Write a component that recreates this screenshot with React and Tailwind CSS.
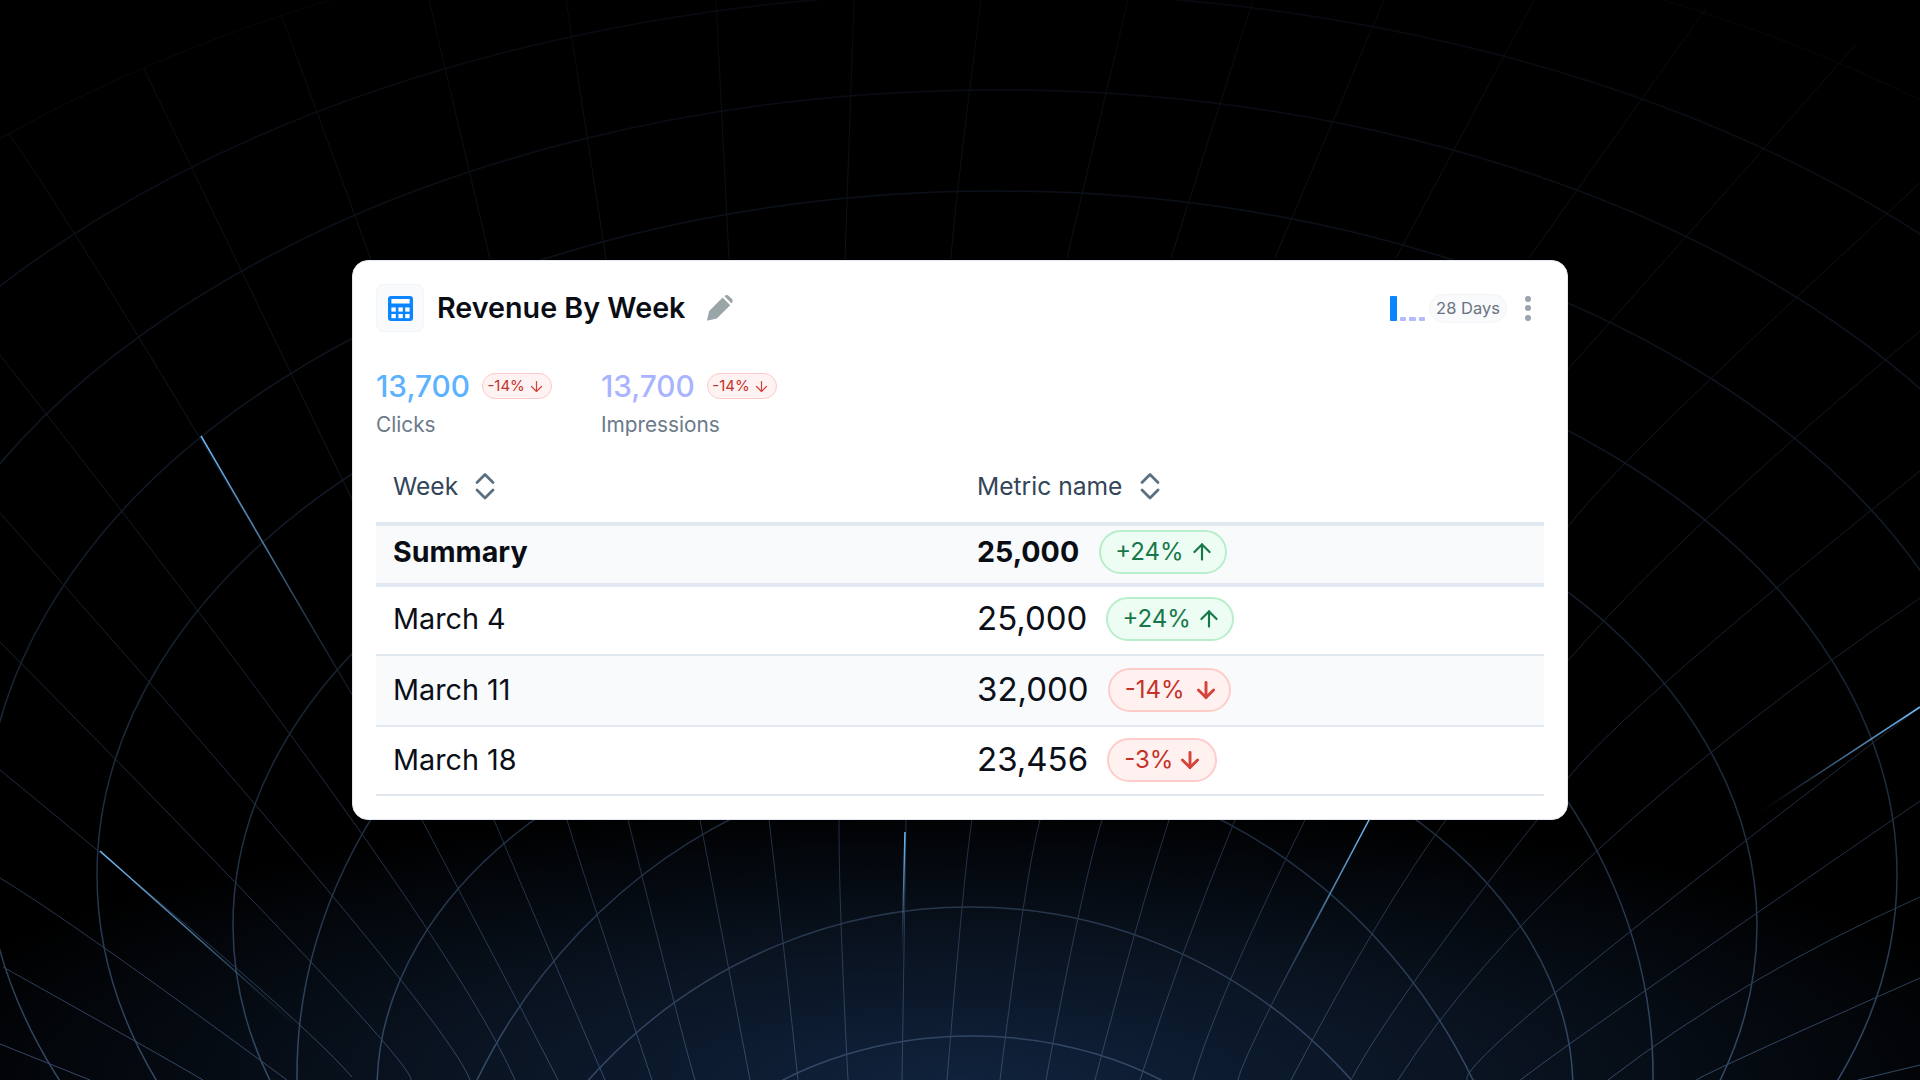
import React from "react";
import { ArrowUp, ArrowDown } from "lucide-react";

const rings = [
  [997, 730, 1430, 825, 0.5],
  [997, 765, 1270, 773, 1],
  [997, 800, 1132, 710, 1],
  [997, 836, 1013, 645, 1],
  [997, 875, 900, 575, 1],
  [995, 925, 762, 505, 1],
  [975, 1075, 678, 563, 1],
  [975, 1090, 598, 400, 1],
  [975, 1350, 560, 590, 1.1],
  [970, 1447, 520, 540, 1.1],
  [972, 1297, 340, 261, 1.1],
];

const lines = [
  [[282, 17], [355, 216], [370, 259]],
  [[429, 0], [490, 259]],
  [[566, 0], [606, 259]],
  [[716, 0], [729, 259]],
  [[854, 0], [845, 259]],
  [[981, 0], [960, 170], [951, 259]],
  [[1128, 0], [1067, 258]],
  [[1253, 0], [1171, 258]],
  [[1384, 0], [1275, 258]],
  [[1534, 0], [1396, 258]],
  [[1707, 7], [1529, 258]],
  [[1857, 43], [1667, 258], [1560, 378]],
  [[1920, 183], [1658, 430], [1560, 540]],
  [[1920, 331], [1706, 519], [1560, 670]],
  [[1920, 471], [1665, 683], [1560, 790]],
  [[1920, 598], [1708, 747], [1600, 848], [1398, 1080]],
  [[1920, 707], [1630, 922], [1550, 997], [1476, 1080]],
  [[1920, 801], [1645, 978], [1564, 1048], [1531, 1080]],
  [[1920, 897], [1754, 982], [1608, 1080]],
  [[1920, 978], [1735, 1061], [1700, 1080]],
  [[1920, 1065], [1858, 1080]],
  [[9, 134], [138, 336], [360, 708]],
  [[144, 69], [242, 272], [360, 516]],
  [[0, 355], [125, 507], [292, 733], [352, 820], [428, 938], [515, 1080]],
  [[0, 513], [153, 679], [340, 905], [470, 1080]],
  [[0, 642], [120, 756], [310, 961], [411, 1080]],
  [[0, 770], [235, 967], [352, 1077]],
  [[0, 878], [106, 949], [287, 1080]],
  [[3, 967], [133, 1040], [203, 1080]],
  [[0, 1044], [90, 1080]],
  [[422, 820], [515, 997], [558, 1080]],
  [[494, 820], [550, 952], [605, 1080]],
  [[567, 820], [595, 908], [652, 1080]],
  [[628, 820], [673, 998], [695, 1080]],
  [[700, 820], [728, 965], [750, 1080]],
  [[769, 820], [783, 942], [798, 1080]],
  [[839, 820], [841, 923], [848, 1080]],
  [[906, 820], [902, 1080]],
  [[972, 820], [962, 908], [947, 1080]],
  [[1040, 820], [1023, 910], [1000, 1080]],
  [[1102, 820], [1078, 918], [1046, 1080]],
  [[1169, 820], [1135, 933], [1095, 1080]],
  [[1235, 820], [1184, 951], [1140, 1080]],
  [[1305, 820], [1233, 974], [1193, 1080]],
  [[1369, 820], [1274, 1000], [1238, 1080]],
  [[1446, 820], [1376, 927], [1291, 1080]],
  [[1537, 820], [1486, 882], [1419, 975], [1352, 1078]],
];

const toPath = (pts) => {
  const a = pts[0];
  const b = pts[pts.length - 1];
  if (pts.length === 2) return `M${a[0]} ${a[1]}L${b[0]} ${b[1]}`;
  const m = pts[Math.floor(pts.length / 2)];
  const cx = 2 * m[0] - (a[0] + b[0]) / 2;
  const cy = 2 * m[1] - (a[1] + b[1]) / 2;
  return `M${a[0]} ${a[1]}Q${cx} ${cy} ${b[0]} ${b[1]}`;
};

const glints = [
  ["g1", [201, 436], [344, 682]],
  ["g2", [100, 851], [300, 1029]],
  ["g3", [905, 832], [902, 955]],
  ["g4", [1369, 820], [1272, 1004]],
  ["g5", [1920, 707], [1760, 812]],
];

function Backdrop() {
  return (
    <svg className="absolute inset-0 h-full w-full" viewBox="0 0 1920 1080" preserveAspectRatio="none" fill="none">
      <defs>
        <linearGradient id="mesh" gradientUnits="userSpaceOnUse" x1="0" y1="0" x2="0" y2="1080">
          <stop offset="0" stopColor="#070a10" />
          <stop offset="0.25" stopColor="#0c121c" />
          <stop offset="0.55" stopColor="#141e2c" />
          <stop offset="0.8" stopColor="#223146" />
          <stop offset="1" stopColor="#344a68" />
        </linearGradient>
        {glints.map(([id, s, e]) => (
          <linearGradient key={id} id={id} gradientUnits="userSpaceOnUse" x1={s[0]} y1={s[1]} x2={e[0]} y2={e[1]}>
            <stop offset="0" stopColor="#70bcfb" />
            <stop offset="0.45" stopColor="#5f9ccc" stopOpacity="0.75" />
            <stop offset="1" stopColor="#3a4f6e" stopOpacity="0" />
          </linearGradient>
        ))}
      </defs>
      {lines.map((pts, i) => (
        <path key={i} d={toPath(pts)} stroke="url(#mesh)" strokeWidth="1" />
      ))}
      {rings.map(([cx, cy, rx, ry, o], i) => (
        <ellipse key={i} cx={cx} cy={cy} rx={rx} ry={ry} stroke="url(#mesh)" strokeWidth="1.5" opacity={o} />
      ))}
      <path d="M201 436Q268 552 344 682" stroke="url(#g1)" strokeWidth="1.5" />
      <path d="M100 851L300 1029" stroke="url(#g2)" strokeWidth="1.5" />
      <path d="M905 832L902 955" stroke="url(#g3)" strokeWidth="1.5" />
      <path d="M1369 820L1272 1004" stroke="url(#g4)" strokeWidth="1.5" />
      <path d="M1920 707L1760 812" stroke="url(#g5)" strokeWidth="1.5" />
    </svg>
  );
}

function TableIcon() {
  return (
    <svg width="25" height="25" viewBox="0 0 25 25">
      <rect width="25" height="25" rx="3" fill="#0a84ff" />
      <rect x="3.4" y="3" width="18.2" height="4.5" fill="#fff" />
      {[11.4, 18].map((y) =>
        [3.4, 10.4, 17.2].map((x) => <rect key={`${x}-${y}`} x={x} y={y} width="4.4" height="4.2" fill="#fff" />)
      )}
    </svg>
  );
}

function PencilIcon() {
  return (
    <svg width="26" height="26" viewBox="0 0 26 26" fill="#9aa5a8">
      <path d="M0.5 25.5c-.4-.1-.5-.4-.4-.8L2.2 16 15.6 2.6l7.6 7.6L9.8 23.6 1 25.6z" />
      <path d="M17.2 1l1.2-.6c1.2-.6 2.4-.5 3.4.5l3 2.9c1 1 1.2 2.3.5 3.5l-.7 1.2z" />
    </svg>
  );
}

function SortIcon() {
  return (
    <svg width="20" height="28" viewBox="0 0 20 28" fill="none" stroke="#5d707f" strokeWidth="2.8" strokeLinecap="round" strokeLinejoin="round">
      <path d="M2 10.5L10 2.5L18 10.5" />
      <path d="M2 18L10 26L18 18" />
    </svg>
  );
}

function SmallBadge() {
  return (
    <span className="flex h-[26px] w-[70px] items-center gap-[3px] rounded-full border-[1.5px] border-[#fecaca] bg-[#fef2f2] pl-[4.5px] text-[15px] text-[#c2332b]">
      -14%
      <ArrowDown size={17} strokeWidth={1.7} color="#d0413a" />
    </span>
  );
}

function Stat({ color, label }) {
  return (
    <div>
      <div className="flex h-[28px] items-center gap-3">
        <span className="text-[29.8px] font-medium leading-7" style={{ color }}>13,700</span>
        <SmallBadge />
      </div>
      <div className="mt-[11px] text-[20.8px] leading-7 text-[#6b7a89]">{label}</div>
    </div>
  );
}

function Badge({ up, text, className }) {
  const tone = up
    ? "gap-[5px] pl-[14px] border-[#b9eecb] bg-[#edfdf3] text-[#16784a]"
    : "pl-[15px] border-[#fecdca] bg-[#fef1f0] text-[#c4322a]";
  return (
    <span className={`flex h-[44px] items-center rounded-full border-2 text-[24px] ${tone} ${className}`}>
      {text}
      {up ? <ArrowUp size={26} strokeWidth={2} /> : <ArrowDown size={26} strokeWidth={2.7} color="#d6433b" />}
    </span>
  );
}

function Row({ name, value, up, pct, className, badgeWidth }) {
  return (
    <div className={`grid grid-cols-2 items-center border-b-2 border-[#e2e8f0] ${className}`}>
      <div className="pl-[17px] text-[28.8px] text-[#0b0f17]">{name}</div>
      <div className="flex items-center gap-[19px] pl-[17px] text-[33px] text-[#0b0f17]">
        <span>{value}</span>
        <Badge up={up} text={pct} className={badgeWidth} />
      </div>
    </div>
  );
}

export default function App() {
  return (
    <div className="relative flex h-screen w-full items-center justify-center overflow-hidden bg-[radial-gradient(ellipse_1100px_280px_at_50%_100%,#10223c_0%,#0a1422_45%,#000_100%)] font-['Inter',sans-serif]">
      <Backdrop />
      <div className="relative flex h-[560px] w-[1216px] flex-col rounded-[16px] border border-[#e2e8f0] bg-white p-[23px]">
        <div className="flex h-12 shrink-0 items-center">
          <div className="flex h-12 w-12 items-center justify-center rounded-lg border border-[#f1f5f9] bg-[#f8fafc]">
            <TableIcon />
          </div>
          <div className="ml-[13px] text-[28.7px] font-semibold text-[#0a0e14]">Revenue By Week</div>
          <div className="ml-[22px]"><PencilIcon /></div>
          <div className="ml-auto flex items-center">
            <div className="flex h-[25px] items-end gap-[3px]">
              <span className="h-[25px] w-[7px] rounded-[1px] bg-[#0a84ff]" />
              <span className="h-1 w-[6px] rounded-[1px] bg-[#b3bbff]" />
              <span className="h-1 w-[7px] rounded-[1px] bg-[#b3bbff]" />
              <span className="h-1 w-[6px] rounded-[1px] bg-[#b3bbff]" />
            </div>
            <div className="ml-1 flex h-[29px] w-[78px] items-center justify-center rounded-full border border-[#f1f5f9] bg-[#f8fafc] text-[16.5px] text-[#6b7280]">28 Days</div>
            <div className="ml-[18px] mr-[13px] flex flex-col gap-[3.5px]">
              <span className="h-[6px] w-[6px] rounded-full bg-[#9ca3af]" />
              <span className="h-[6px] w-[6px] rounded-full bg-[#9ca3af]" />
              <span className="h-[6px] w-[6px] rounded-full bg-[#9ca3af]" />
            </div>
          </div>
        </div>

        <div className="mt-10 flex gap-[49px]">
          <Stat color="#5cb2ff" label="Clicks" />
          <Stat color="#a9b4ff" label="Impressions" />
        </div>

        <div className="mt-3 grid h-[71px] shrink-0 grid-cols-2 items-center text-[24.6px] text-[#334559]">
          <div className="flex items-center gap-[17px] pl-[17px]">Week <SortIcon /></div>
          <div className="flex items-center gap-[18px] pl-[17px]">Metric name <SortIcon /></div>
        </div>

        <div className="grid h-[65px] shrink-0 grid-cols-2 items-center border-y-4 border-[#e2e8f0] bg-[#f8fafc] pb-[5px]">
          <div className="pl-[17px] text-[28.6px] font-bold text-[#0a0e14]">Summary</div>
          <div className="flex items-center gap-5 pl-[17px] text-[28.6px] font-bold text-[#0a0e14]">
            <span>25,000</span>
            <Badge up text="+24%" className="w-[128px] font-normal" />
          </div>
        </div>
        <Row name="March 4" value="25,000" up pct="+24%" className="h-[69px] shrink-0 pb-1" badgeWidth="w-[128px]" />
        <Row name="March 11" value="32,000" pct="-14%" className="h-[71px] shrink-0 bg-[#f8fafc] pb-[2px]" badgeWidth="w-[123px] gap-2" />
        <Row name="March 18" value="23,456" pct="-3%" className="h-[69px] shrink-0 pb-[1px]" badgeWidth="w-[110px] gap-1" />
      </div>
    </div>
  );
}
